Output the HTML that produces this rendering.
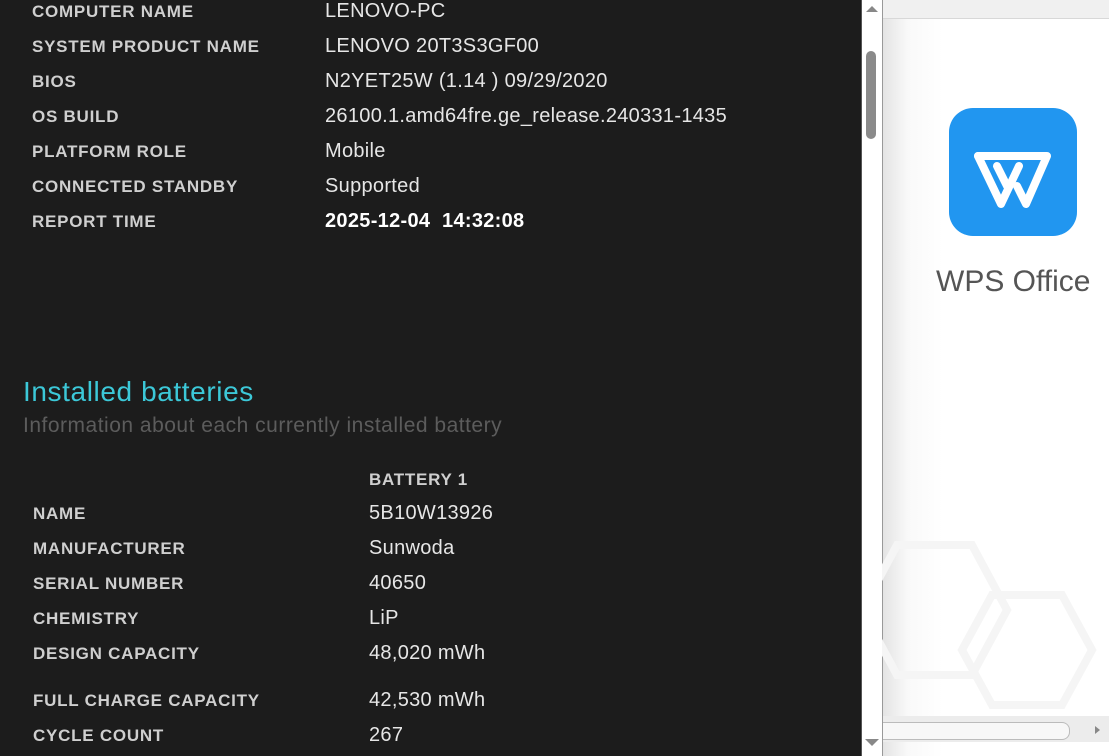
<!DOCTYPE html><html><head><style>
body{margin:0;width:1109px;height:756px;overflow:hidden;position:relative;background:#1c1c1c;font-family:"Liberation Sans",sans-serif}
.l{position:absolute;color:#cfcfcf;font-size:17px;font-weight:bold;letter-spacing:0.75px}
.v{position:absolute;color:#e6e6e6;font-size:20px;letter-spacing:0.3px}
</style></head><body>
<div style="position:absolute;left:0;top:0;width:861px;height:756px;background:#1c1c1c"></div>
<div class="l" style="left:32px;top:2px">COMPUTER NAME</div><div class="v" style="left:325px;top:0px">LENOVO-PC</div>
<div class="l" style="left:32px;top:37px">SYSTEM PRODUCT NAME</div><div class="v" style="left:325px;top:35px">LENOVO 20T3S3GF00</div>
<div class="l" style="left:32px;top:72px">BIOS</div><div class="v" style="left:325px;top:70px">N2YET25W (1.14 ) 09/29/2020</div>
<div class="l" style="left:32px;top:107px">OS BUILD</div><div class="v" style="left:325px;top:105px">26100.1.amd64fre.ge_release.240331-1435</div>
<div class="l" style="left:32px;top:142px">PLATFORM ROLE</div><div class="v" style="left:325px;top:140px">Mobile</div>
<div class="l" style="left:32px;top:177px">CONNECTED STANDBY</div><div class="v" style="left:325px;top:175px">Supported</div>
<div class="l" style="left:32px;top:212px">REPORT TIME</div><div class="v" style="left:325px;top:210px;font-weight:bold;color:#fff">2025-12-04&nbsp; 14:32:08</div>
<div style="position:absolute;left:23px;top:376px;font-size:28px;letter-spacing:0.6px;color:#3cc8d8">Installed batteries</div>
<div style="position:absolute;left:23px;top:414px;font-size:21px;letter-spacing:0.5px;color:#5c5c5c">Information about each currently installed battery</div>
<div class="l" style="left:369px;top:470px">BATTERY 1</div>
<div class="l" style="left:33px;top:504px">NAME</div><div class="v" style="left:369px;top:502px">5B10W13926</div>
<div class="l" style="left:33px;top:539px">MANUFACTURER</div><div class="v" style="left:369px;top:537px">Sunwoda</div>
<div class="l" style="left:33px;top:574px">SERIAL NUMBER</div><div class="v" style="left:369px;top:572px">40650</div>
<div class="l" style="left:33px;top:609px">CHEMISTRY</div><div class="v" style="left:369px;top:607px">LiP</div>
<div class="l" style="left:33px;top:644px">DESIGN CAPACITY</div><div class="v" style="left:369px;top:642px">48,020 mWh</div>
<div class="l" style="left:33px;top:691px">FULL CHARGE CAPACITY</div><div class="v" style="left:369px;top:689px">42,530 mWh</div>
<div class="l" style="left:33px;top:726px">CYCLE COUNT</div><div class="v" style="left:369px;top:724px">267</div>
<div style="position:absolute;left:861px;top:0;width:20px;height:756px;background:#fff;border-left:1px solid #555"></div>
<div style="position:absolute;left:866px;top:6px;width:0;height:0;border-left:6px solid transparent;border-right:6px solid transparent;border-bottom:6px solid #888"></div>
<div style="position:absolute;left:866px;top:51px;width:10px;height:88px;background:#8a8a8a;border-radius:5px"></div>
<div style="position:absolute;left:865px;top:739px;width:0;height:0;border-left:7px solid transparent;border-right:7px solid transparent;border-top:7px solid #888"></div>
<div style="position:absolute;left:882px;top:0;width:227px;height:756px;background:linear-gradient(90deg,#e4e4e4,#f9f9f9 25px,#fff 60px);border-left:1px solid #999"></div>
<div style="position:absolute;left:883px;top:0;width:226px;height:18px;background:#f0f0f0;border-bottom:1px solid #d8d8d8"></div>
<div style="position:absolute;left:949px;top:108px;width:128px;height:128px;background:#2196f0;border-radius:24px"></div>
<svg style="position:absolute;left:949px;top:108px" width="128" height="128" viewBox="0 0 128 128"><g fill="none" stroke="#fff" stroke-width="8" stroke-linejoin="round" stroke-linecap="round"><path d="M29 48 H98 L77 96 L68 78"/><path d="M29 48 L52 96 L70 58"/><path d="M48 58 L58 78"/></g></svg>
<div style="position:absolute;left:936px;top:265px;font-size:30px;color:#555">WPS Office</div>
<svg style="position:absolute;left:882px;top:500px" width="227" height="220"><g fill="none" stroke="#f5f5f5" stroke-width="8"><polygon points="15,45 90,45 125,110 90,175 15,175 -20,110"/><polygon points="110,95 180,95 210,150 180,205 110,205 80,150"/></g></svg>
<div style="position:absolute;left:883px;top:716px;width:226px;height:26px;background:#ececec"></div>
<div style="position:absolute;left:883px;top:722px;width:186px;height:16px;background:#f7f7f7;border:1px solid #bbb;border-left:none;border-radius:0 8px 8px 0"></div>
<div style="position:absolute;left:1095px;top:726px;width:0;height:0;border-top:4px solid transparent;border-bottom:4px solid transparent;border-left:5px solid #888"></div>
</body></html>
